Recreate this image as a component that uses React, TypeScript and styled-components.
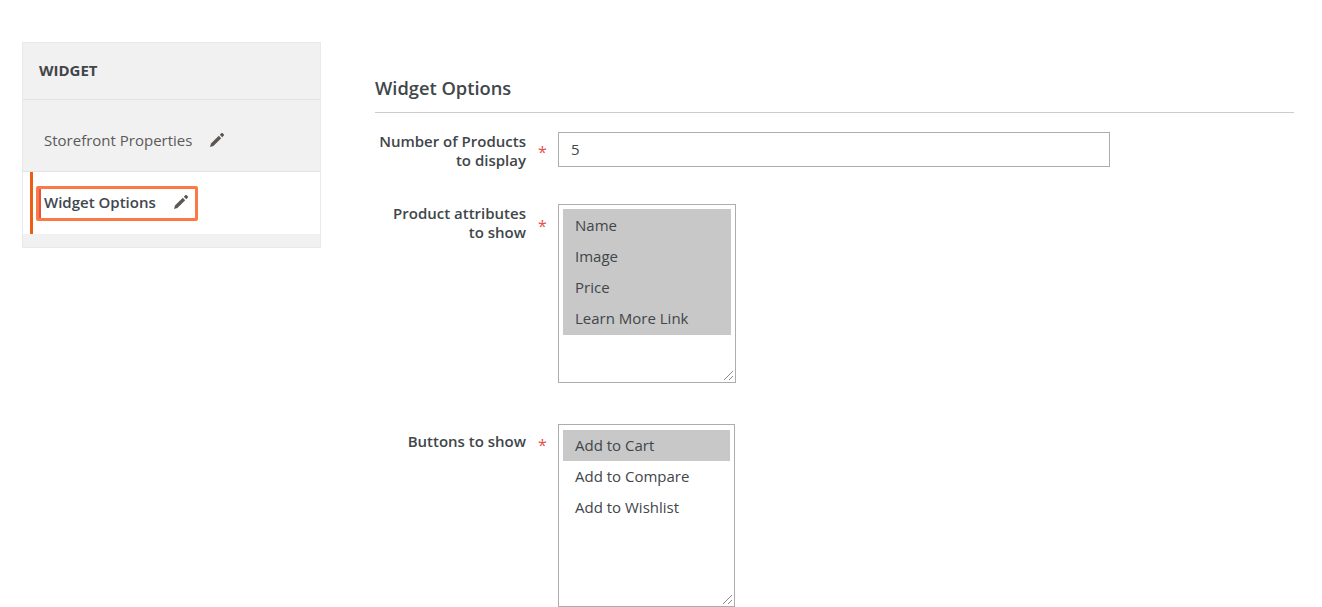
import React, { FC } from "react";
import styled, { createGlobalStyle } from "styled-components";

const GlobalStyle = createGlobalStyle`
  html, body {
    margin: 0;
    padding: 0;
    background: #fff;
    overflow: hidden;
  }
  body {
    font-family: "Open Sans", "Liberation Sans", sans-serif;
    font-size: 15px;
    color: #41362f;
  }
`;

const Page = styled.div`
  display: flex;
  align-items: flex-start;
  width: 1322px;
  height: 607px;
  padding: 42px 0 0 22px;
  box-sizing: border-box;
  overflow: hidden;
`;

const Sidebar = styled.aside`
  width: 299px;
  flex: none;
  box-sizing: border-box;
  background: #f1f1f1;
  border: 1px solid #e9e9e9;
  padding-bottom: 13px;
`;

const SidebarTitle = styled.div`
  height: 57px;
  box-sizing: border-box;
  padding: 0 16px 2px;
  display: flex;
  align-items: center;
  border-bottom: 1px solid #e3e3e3;
  font-size: 15px;
  font-weight: 700;
  color: #41464a;
`;

const SidebarItem = styled.div`
  height: 72px;
  box-sizing: border-box;
  padding: 30px 0 0 21px;
  display: flex;
  align-items: flex-start;
  gap: 17px;
  border-bottom: 1px solid #e3e3e3;
  line-height: 20px;
  color: #5a5a5a;

  svg {
    margin-top: 2px;
  }
`;

const ActiveRow = styled.div`
  height: 62px;
  box-sizing: border-box;
  background: #fff;
  padding: 0 0 0 7px;
`;

const ActiveBar = styled.div`
  height: 100%;
  box-sizing: border-box;
  border-left: 3px solid #eb5f14;
  padding: 14px 0 0 3px;
`;

const Highlight = styled.div`
  display: inline-flex;
  align-items: center;
  gap: 17px;
  width: 162px;
  height: 35px;
  box-sizing: border-box;
  border: 3px solid #f97a45;
  border-radius: 2px;
  padding: 0 0 4px 5px;
  font-weight: 600;
  color: #41464f;
  position: relative;

  &::before {
    content: " ";
    position: absolute;
    left: 0;
    top: 0;
    bottom: 0;
    width: 2px;
    background: #e8503f;
  }
`;

const Content = styled.main`
  width: 919px;
  margin-left: 54px;
  flex: none;
`;

const SectionTitle = styled.h2`
  margin: 0;
  padding: 34px 0 12px;
  height: 71px;
  box-sizing: border-box;
  border-bottom: 1px solid #cccccc;
  font-size: 18.3px;
  line-height: 23px;
  font-weight: 600;
  color: #41464a;
`;

const FieldRow = styled.div<{ $gap: number }>`
  display: flex;
  align-items: flex-start;
  margin-top: ${(p) => p.$gap}px;
`;

const Label = styled.label<{ $offset?: number }>`
  width: 151px;
  flex: none;
  padding-top: ${(p) => p.$offset ?? 0}px;
  text-align: right;
  line-height: 19px;
  font-weight: 600;
  white-space: nowrap;
  color: #41464a;
`;

const Required = styled.span<{ $offset: number }>`
  width: 32px;
  flex: none;
  padding-left: 12px;
  padding-top: ${(p) => p.$offset}px;
  box-sizing: border-box;
  color: #e4504a;
  font-size: 16px;
  line-height: 20px;
`;

const TextField = styled.div`
  width: 552px;
  height: 35px;
  box-sizing: border-box;
  border: 1px solid #adadad;
  padding: 0 12px;
  line-height: 33px;
  color: #41464a;
`;

const ListBox = styled.div<{ $width: number; $height: number; $top: number }>`
  position: relative;
  width: ${(p) => p.$width}px;
  height: ${(p) => p.$height}px;
  box-sizing: border-box;
  border: 1px solid #adadad;
  padding: ${(p) => p.$top}px 4px 4px;
`;

const SelectedGroup = styled.div`
  padding: 1px 0;
  background: #c8c8c8;
`;

const ListOption = styled.div<{ $selected?: boolean }>`
  height: 31px;
  padding-left: 12px;
  line-height: 31px;
  color: #41464a;
  background: ${(p) => (p.$selected ? "#c8c8c8" : "transparent")};
`;

const Grip = styled.svg`
  position: absolute;
  right: 1px;
  bottom: 1px;
`;

const PencilIcon: FC = () => (
  <svg width="16" height="16" viewBox="0 0 16 16" aria-hidden="true">
    <path d="M1 15l1-3.4 7.8-7.8 2.4 2.4-7.8 7.8z" fill="#5c5652" />
    <path d="M10.8 2.8l1.7-1.7c.3-.3.7-.3 1 0l1.4 1.4c.3.3.3.7 0 1l-1.7 1.7z" fill="#5c5652" />
  </svg>
);

const ResizeGrip: FC = () => (
  <Grip width="11" height="11" viewBox="0 0 11 11" aria-hidden="true">
    <path d="M1 10L10 1M6 10l4-4" stroke="#8a8a8a" strokeWidth="1" fill="none" />
  </Grip>
);

const attributes = ["Name", "Image", "Price", "Learn More Link"];
const buttons = [
  { label: "Add to Cart", selected: true },
  { label: "Add to Compare", selected: false },
  { label: "Add to Wishlist", selected: false },
];

const App: FC = () => (
  <Page>
    <GlobalStyle />
    <Sidebar>
      <SidebarTitle>WIDGET</SidebarTitle>
      <SidebarItem>
        Storefront Properties
        <PencilIcon />
      </SidebarItem>
      <ActiveRow>
        <ActiveBar>
          <Highlight>
            Widget Options
            <PencilIcon />
          </Highlight>
        </ActiveBar>
      </ActiveRow>
    </Sidebar>
    <Content>
      <SectionTitle>Widget Options</SectionTitle>
      <FieldRow $gap={19}>
        <Label>
          Number of Products
          <br />
          to display
        </Label>
        <Required $offset={10}>*</Required>
        <TextField>5</TextField>
      </FieldRow>
      <FieldRow $gap={34}>
        <Label>
          Product attributes
          <br />
          to show
        </Label>
        <Required $offset={12}>*</Required>
        <ListBox $width={178} $height={179} $top={4}>
          <SelectedGroup>
            {attributes.map((name) => (
              <ListOption key={name}>{name}</ListOption>
            ))}
          </SelectedGroup>
          <ResizeGrip />
        </ListBox>
      </FieldRow>
      <FieldRow $gap={41}>
        <Label $offset={8}>Buttons to show</Label>
        <Required $offset={11}>*</Required>
        <ListBox $width={177} $height={183} $top={5}>
          {buttons.map((b) => (
            <ListOption key={b.label} $selected={b.selected}>
              {b.label}
            </ListOption>
          ))}
          <ResizeGrip />
        </ListBox>
      </FieldRow>
    </Content>
  </Page>
);

export default App;
